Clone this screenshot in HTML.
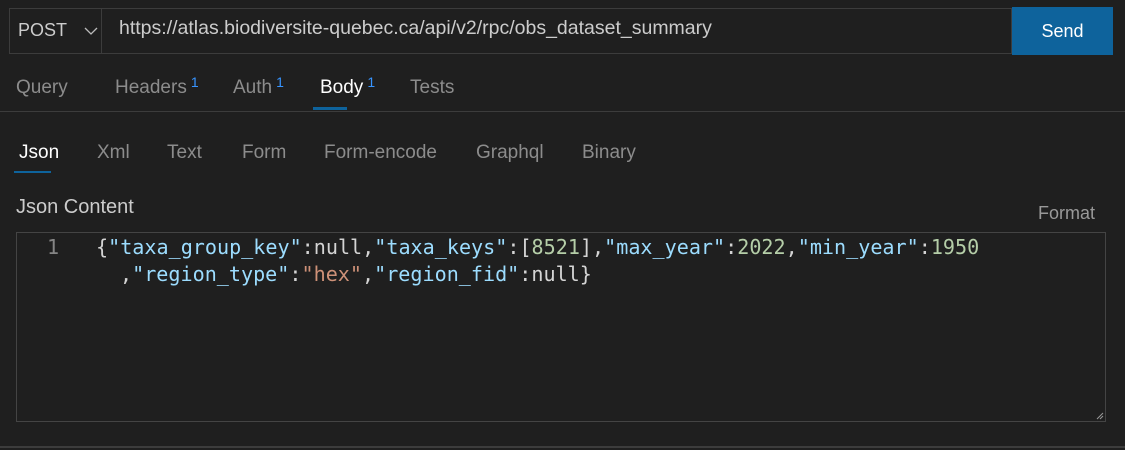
<!DOCTYPE html>
<html><head><style>
body{margin:0;width:1125px;height:450px;background:#1f1f1f;position:relative;overflow:hidden;font-family:"Liberation Sans",sans-serif;}
.a{position:absolute;white-space:nowrap;}
.t{font-size:19px;color:#8c8c8c;top:77px;}
.s{font-size:19px;color:#8c8c8c;top:142px;}
sup{color:#3794ff;font-size:14px;position:relative;top:-3px;vertical-align:top;margin-left:4px}
.code{font-family:"DejaVu Sans Mono",monospace;font-size:20.1px;color:#d4d4d4;}
.k{color:#9cdcfe}.n{color:#b5cea8}.s2{color:#ce9178}
</style></head><body>
<div class="a" style="left:9px;top:8px;width:1003px;height:46px;border:1px solid #3c3c3c;box-sizing:border-box"></div>
<div class="a" style="left:101px;top:8px;width:1px;height:46px;background:#3c3c3c"></div>
<div class="a" style="left:18px;top:20px;font-size:18px;color:#ccc">POST</div>
<svg class="a" style="left:84px;top:27px" width="14" height="9"><path d="M1 1L7 7L13 1" stroke="#bbb" fill="none" stroke-width="1.3"/></svg>
<div class="a" style="left:119px;top:17px;font-size:19.5px;color:#ccc">https://atlas.biodiversite-quebec.ca/api/v2/rpc/obs_dataset_summary</div>
<div class="a" style="left:1012px;top:7px;width:101px;height:48px;background:#0e639c;color:#fff;font-size:18px;text-align:center;line-height:48px">Send</div>
<div class="a t" style="left:16px">Query</div>
<div class="a t" style="left:115px">Headers<sup>1</sup></div>
<div class="a t" style="left:233px">Auth<sup>1</sup></div>
<div class="a t" style="left:320px;color:#fff">Body<sup>1</sup></div>
<div class="a t" style="left:410px">Tests</div>
<div class="a" style="left:313px;top:107px;width:34px;height:3px;background:#0e639c"></div>
<div class="a" style="left:0;top:111px;width:1125px;height:1px;background:#3c3c3c"></div>
<div class="a s" style="left:19px;color:#fff">Json</div>
<div class="a s" style="left:97px">Xml</div>
<div class="a s" style="left:167px">Text</div>
<div class="a s" style="left:242px">Form</div>
<div class="a s" style="left:324px">Form-encode</div>
<div class="a s" style="left:476px">Graphql</div>
<div class="a s" style="left:582px">Binary</div>
<div class="a" style="left:14px;top:171px;width:37px;height:2px;background:#0e639c"></div>
<div class="a" style="left:16px;top:196px;font-size:20px;color:#ccc">Json Content</div>
<div class="a" style="left:1038px;top:203px;font-size:18px;color:#999">Format</div>
<div class="a" style="left:16px;top:232px;width:1090px;height:190px;border:1px solid #444;box-sizing:border-box"></div>
<div class="a code" style="left:47px;top:235px;color:#858585">1</div>
<div class="a code" style="left:96px;top:235px">{<span class="k">"taxa_group_key"</span>:null,<span class="k">"taxa_keys"</span>:[<span class="n">8521</span>],<span class="k">"max_year"</span>:<span class="n">2022</span>,<span class="k">"min_year"</span>:<span class="n">1950</span></div>
<div class="a code" style="left:120px;top:262px">,<span class="k">"region_type"</span>:<span class="s2">"hex"</span>,<span class="k">"region_fid"</span>:null}</div>
<svg class="a" style="left:1096px;top:412px" width="8" height="8"><path d="M1 7L7 1M4 7L7 4" stroke="#999"/></svg>
<div class="a" style="left:0;top:446px;width:1125px;height:2px;background:#3c3c3c"></div>
</body></html>
